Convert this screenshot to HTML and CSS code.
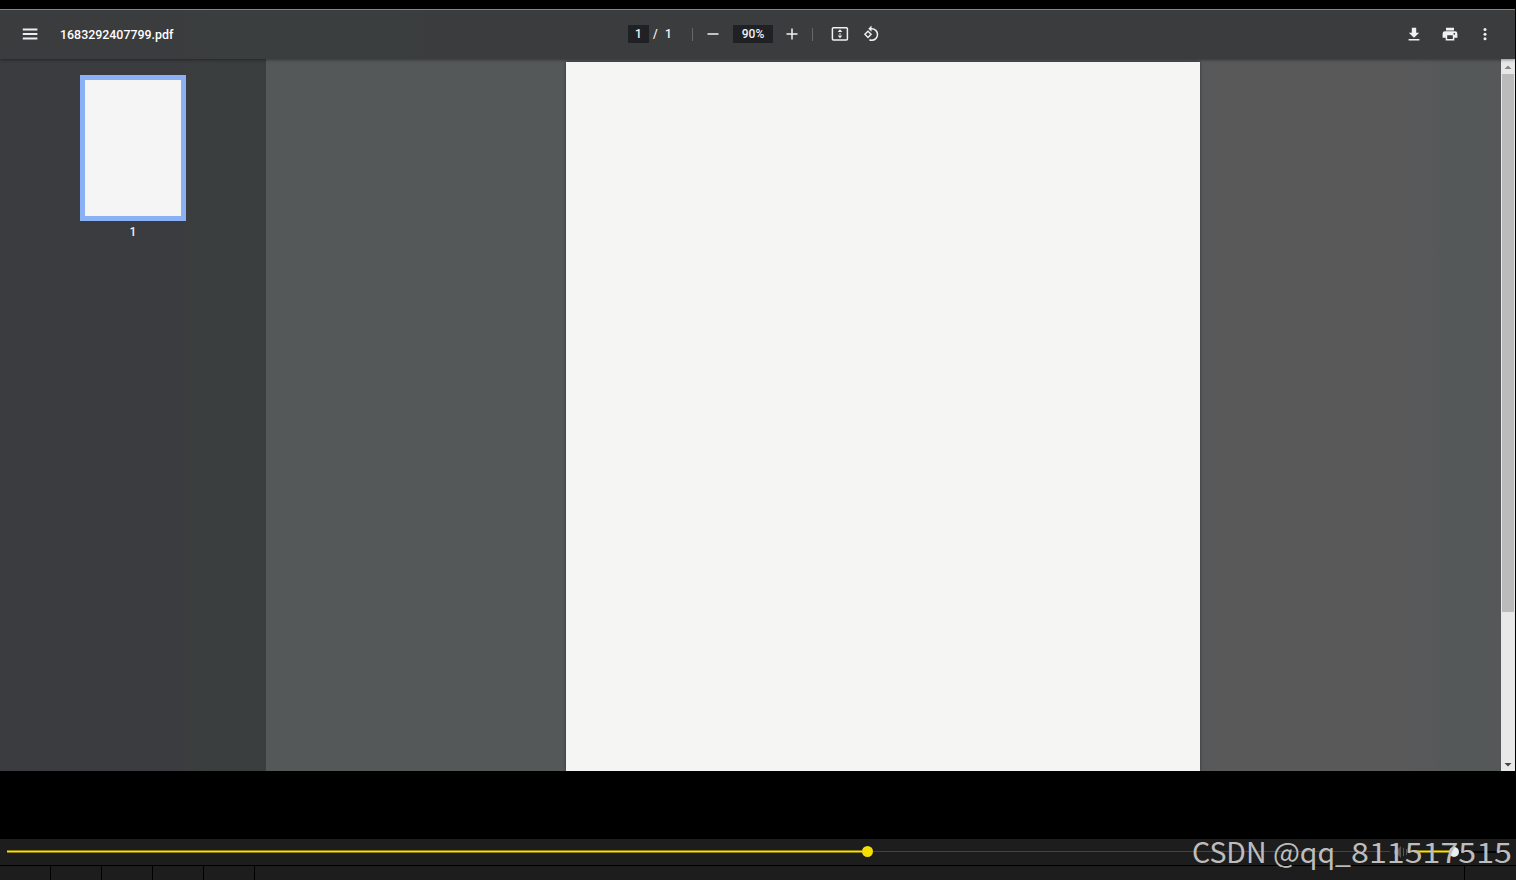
FILE: index.html
```html
<!DOCTYPE html>
<html lang="en">
<head>
<meta charset="utf-8">
<title>1683292407799.pdf</title>
<link rel="stylesheet" href="styles.css">
</head>
<body>
<div class="screen">
  <div class="viewer">
    <header class="toolbar">
      <div class="start">
        <svg class="menu" width="16" height="12" viewBox="0 0 16 12"><path d="M.8 1.500h14.600M.8 6h14.600M.8 10.500h14.600" stroke="#efedf2" stroke-width="1.800"/></svg>
        <span class="title">1683292407799.pdf</span>
      </div>
      <div class="center">
        <span class="field page-no">1</span><span class="slash">/</span><span class="total">1</span>
        <i class="divider first"></i>
        <svg class="minus" width="12" height="12"><path d="M.5 6h11" stroke="#f1f1f1" stroke-width="1.5"/></svg>
        <span class="field zoom">90%</span>
        <svg class="plus" width="12" height="12"><path d="M.5 6h11M6 .5v11" stroke="#f1f1f1" stroke-width="1.5"/></svg>
        <i class="divider second"></i>
        <svg class="fit" width="18" height="16" viewBox="0 0 18 16"><rect x="1.4" y="1.7" width="15" height="12.2" rx="1" fill="none" stroke="#f1f1f1" stroke-width="1.5"/><path d="M9 3.3 11.300 6H6.700zM9 12.300 6.700 9.600h4.600zM8.300 7.200h1.400v1.200H8.300z" fill="#f1f1f1"/></svg>
        <svg class="rotate" width="18" height="18" viewBox="0 0 18 18"><path d="M6 6.2 9.1 9.3 6 12.4 2.9 9.3z" fill="none" stroke="#f1f1f1" stroke-width="1.4"/><path d="M8.2 3.7h1.5a5.8 5.8 0 0 1 0 11.6q-1.2 0-2.3-.5" fill="none" stroke="#f1f1f1" stroke-width="1.5"/><path d="M9.5.6v6.2L6.3 3.7z" fill="#f1f1f1"/></svg>
      </div>
      <div class="end">
        <svg width="16" height="16" viewBox="0 0 16 16"><path d="M5.8 1.7h4.4v5h3L8 11.7 2.8 6.7h3zM2.6 12.9h10.8v1.5H2.6z" fill="#f1f1f1"/></svg>
        <svg width="16" height="16" viewBox="0 0 16 16"><path fill-rule="evenodd" d="M4 1.8h8v2.7H4zM3 5.3h10a2.4 2.4 0 0 1 2.4 2.4v4.1h-3.1v2.7H3.7v-2.7H.6V7.700A2.400 2.400 0 0 1 3 5.300zM5.200 9.300v3.700h5.600V9.300zM12.300 7a.8.8 0 1 0 .01 0z" fill="#f1f1f1"/></svg>
        <svg class="more" width="16" height="16" viewBox="0 0 16 16"><g fill="#f1f1f1"><circle cx="8" cy="3.600" r="1.500"/><circle cx="8" cy="8.200" r="1.500"/><circle cx="8" cy="12.800" r="1.500"/></g></svg>
      </div>
    </header>
    <main class="content">
      <aside class="sidebar"><div class="thumb"></div><span class="thumb-label">1</span></aside>
      <section class="document"><div class="page"></div></section>
      <div class="scrollbar">
        <svg width="14" height="15" viewBox="0 0 14 15"><path d="M3.500 10 7 6.500l3.500 3.500z" fill="#858585"/></svg>
        <div class="handle"></div>
        <svg class="down" width="14" height="13" viewBox="0 0 14 13"><path d="M3.500 5h7L7 8.500z" fill="#444"/></svg>
      </div>
    </main>
  </div>
  <div class="player">
    <div class="elapsed"></div><div class="knob"></div><div class="remaining"></div>
    <svg class="speaker" width="16" height="14" viewBox="0 0 16 14"><path d="M1 5h3l4-4v12L4 9H1zM10 3h1v8h-1zM13 4h1v6h-1z" fill="#555"/></svg>
    <div class="volume"></div><div class="volume-knob"></div><div class="volume-rest"></div>
  </div>
  <div class="controls"><i></i><i></i><i></i><i></i><i></i><b></b></div>
  <svg class="watermark" width="324" height="52"><text y="35" textLength="159" lengthAdjust="spacingAndGlyphs">CSDN @qq_</text><text x="159" y="35" textLength="161" lengthAdjust="spacingAndGlyphs">811517515</text></svg>
</div>
</body>
</html>
```
FILE: styles.css
```css
* { box-sizing: border-box; }
body { margin: 0; background: #000; overflow: hidden; }
svg { display: block; flex: none; }
.screen { position: relative; width: 1516px; height: 880px; padding-top: 9px; display: flex; flex-direction: column; font: 12px Roboto, sans-serif; color: #f1f1f1; }
.viewer { width: 1515px; height: 762px; display: flex; flex-direction: column; }
.toolbar { height: 50px; flex: none; padding-bottom: 1px; display: grid; grid-template-columns: 628px 1fr 110px; border-top: 1px solid #858689; background: linear-gradient(90deg, #3b3c3e 0 180px, #3a3e3e 210px 400px, #3b3c3e 430px); box-shadow: 0 1px 3px #0006; position: relative; }
.start, .center, .end { display: flex; align-items: center; }
.start { padding-left: 22px; }
.title { margin-left: 22px; font-weight: 500; font-size: 12.4px; color: #fff; white-space: nowrap; }
.field { background: #202124; height: 18px; line-height: 18px; text-align: center; font-weight: 500; }
.page-no { width: 21px; }
.slash { margin-left: 4px; width: 6px; font-weight: 500; }
.total { margin-left: 6px; width: 7px; font-weight: 500; }
.divider { width: 1px; height: 13px; background: #66676a; }
.first { margin-left: 20px; }
.minus { margin-left: 14px; }
.zoom { width: 40px; margin-left: 14px; }
.plus { margin-left: 13px; }
.second { margin-left: 14px; }
.fit { margin-left: 18px; }
.rotate { margin-left: 13px; }
.end { gap: 20px; padding-left: 1px; }
.more { margin-left: -1px; }
.content { flex: 1; min-height: 0; display: flex; }
.sidebar { width: 266px; padding-top: 16px; display: flex; flex-direction: column; align-items: center; background: linear-gradient(90deg, #3b3c3f 0 180px, #3a3e3e 205px); }
.thumb { width: 106px; height: 146px; border: 5px solid #8ab0f5; background: #f5f5f5; }
.thumb-label { margin-top: 4px; line-height: 14px; font-weight: 500; }
.document { width: 1235px; padding: 3px 0 0 300px; background: linear-gradient(90deg, #555859 0 900px, #59595a 950px 1140px, #555859 1180px); }
.page { width: 634px; height: 709px; background: #f5f5f4; box-shadow: 0 0 3px #222a; clip-path: inset(-3px -3px 0); }
.scrollbar { width: 14px; background: #e8e8e8; display: flex; flex-direction: column; }
.handle { height: 538px; margin: 0 1px; background: #bbb; }
.down { margin-top: auto; }
.player { height: 26px; margin-top: 68px; padding: 0 0 1px 7px; display: flex; align-items: center; background: #1d1d1d; }
.elapsed, .volume { height: 3px; border: solid #8d7f08; border-width: 1px 0; background: #fbe300; }
.elapsed { width: 855px; }
.knob { width: 11px; height: 11px; border-radius: 50%; background: #f6df00; }
.remaining { width: 517px; height: 1px; background: #444; }
.speaker { margin-left: 3px; }
.volume { width: 35px; margin-left: 5px; }
.volume-knob { width: 10px; height: 10px; border-radius: 50%; background: #eee; }
.volume-rest { width: 49px; height: 2px; background: #050505; }
.controls { flex: 1; display: flex; background: #1d1d1d; border-top: 1px solid #000; }
.controls i { width: 51px; border-right: 1px solid #000; }
.controls b { width: 52px; margin-left: auto; border-left: 1px solid #000; }
.watermark { position: absolute; left: 1192px; top: 828px; font: 28px "Noto Sans CJK SC", sans-serif; fill: #bdbdbd; }
```
